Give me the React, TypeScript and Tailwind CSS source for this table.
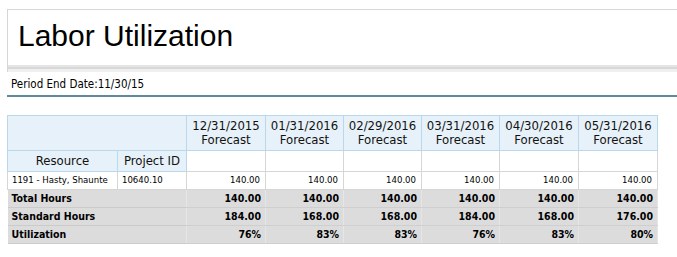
import React from 'react';

const tahoma = { fontFamily: "Tahoma, 'DejaVu Sans Condensed', 'Liberation Sans', sans-serif" };

const dates = ['12/31/2015', '01/31/2016', '02/29/2016', '03/31/2016', '04/30/2016', '05/31/2016'];
const widths = ['w-[79px]', 'w-[78px]', 'w-[78px]', 'w-[78px]', 'w-[79px]', 'w-[79px]'];

const totals: { label: string; values: string[] }[] = [
  { label: 'Total Hours', values: ['140.00', '140.00', '140.00', '140.00', '140.00', '140.00'] },
  { label: 'Standard Hours', values: ['184.00', '168.00', '168.00', '184.00', '168.00', '176.00'] },
  { label: 'Utilization', values: ['76%', '83%', '83%', '76%', '83%', '80%'] },
];

const App: React.FC = () => {
  return (
    <div className="w-[677px] h-[257px] bg-white overflow-hidden text-black" style={tahoma}>
      {/* Title */}
      <div className="ml-[7px] mt-[9px] border-t border-l border-[#d6d6d6]">
        <div className="h-[55px] pl-[10px] pt-[9px] text-[30px] leading-[34px]" style={{ fontFamily: "'Liberation Sans', Arial, sans-serif" }}>
          Labor Utilization
        </div>
        <div className="h-[7px] border-t-2 border-[#e4e4e4] bg-[#d8d8d8] border-b-[3px] border-b-[#efefef]" />
      </div>

      {/* Period */}
      <div className="ml-[7px] h-[25px] border-b-2 border-[#5f8a9a] pl-[4px] pt-[5px] text-[11.5px] leading-[14px]">
        Period End Date:11/30/15
      </div>

      {/* Table */}
      <table className="ml-[7px] mt-[18px] border-collapse table-fixed w-[650px]">
        <colgroup>
          <col className="w-[110px]" />
          <col className="w-[69px]" />
          {widths.map((w, i) => (
            <col key={i} className={w} />
          ))}
        </colgroup>
        <thead>
          <tr className="h-[35px]">
            <th colSpan={2} className="bg-[#e7f1f9] border border-[#b9d8ec]" />
            {dates.map(d => (
              <th key={d} className="bg-[#e7f1f9] border border-[#b9d8ec] p-0 font-normal text-[13px] leading-[14px] text-center align-middle text-[#111]">
                <div>{d}</div>
                <div>Forecast</div>
              </th>
            ))}
          </tr>
          <tr className="h-[21px]">
            <th className="bg-[#e7f1f9] border border-[#b9d8ec] font-normal text-[13px] text-center text-[#111]">Resource</th>
            <th className="bg-[#e7f1f9] border border-[#b9d8ec] font-normal text-[13px] text-center text-[#111]">Project ID</th>
            {dates.map(d => (
              <th key={d} className="bg-white border border-[#d6d6d6] border-t-[#b9d8ec]" />
            ))}
          </tr>
        </thead>
        <tbody>
          <tr className="h-[18px] text-[9.5px]">
            <td className="border border-[#d6d6d6] pl-[4px] whitespace-nowrap">1191 - Hasty, Shaunte</td>
            <td className="border border-[#d6d6d6] pl-[4px]">10640.10</td>
            {dates.map(d => (
              <td key={d} className="border border-[#d6d6d6] text-right pr-[5px]">140.00</td>
            ))}
          </tr>
          {totals.map(row => (
            <tr key={row.label} className="h-[18px] text-[10.5px] font-bold bg-[#dcdcdc]">
              <td colSpan={2} className="border-y border-[#cbcbcb] pl-[4px]">{row.label}</td>
              {row.values.map((v, i) => (
                <td key={i} className="border border-[#cfcfcf] border-l-[#e6e6e6] border-r-[#e6e6e6] text-right pr-[4px]">{v}</td>
              ))}
            </tr>
          ))}
        </tbody>
      </table>
    </div>
  );
};

export default App;
